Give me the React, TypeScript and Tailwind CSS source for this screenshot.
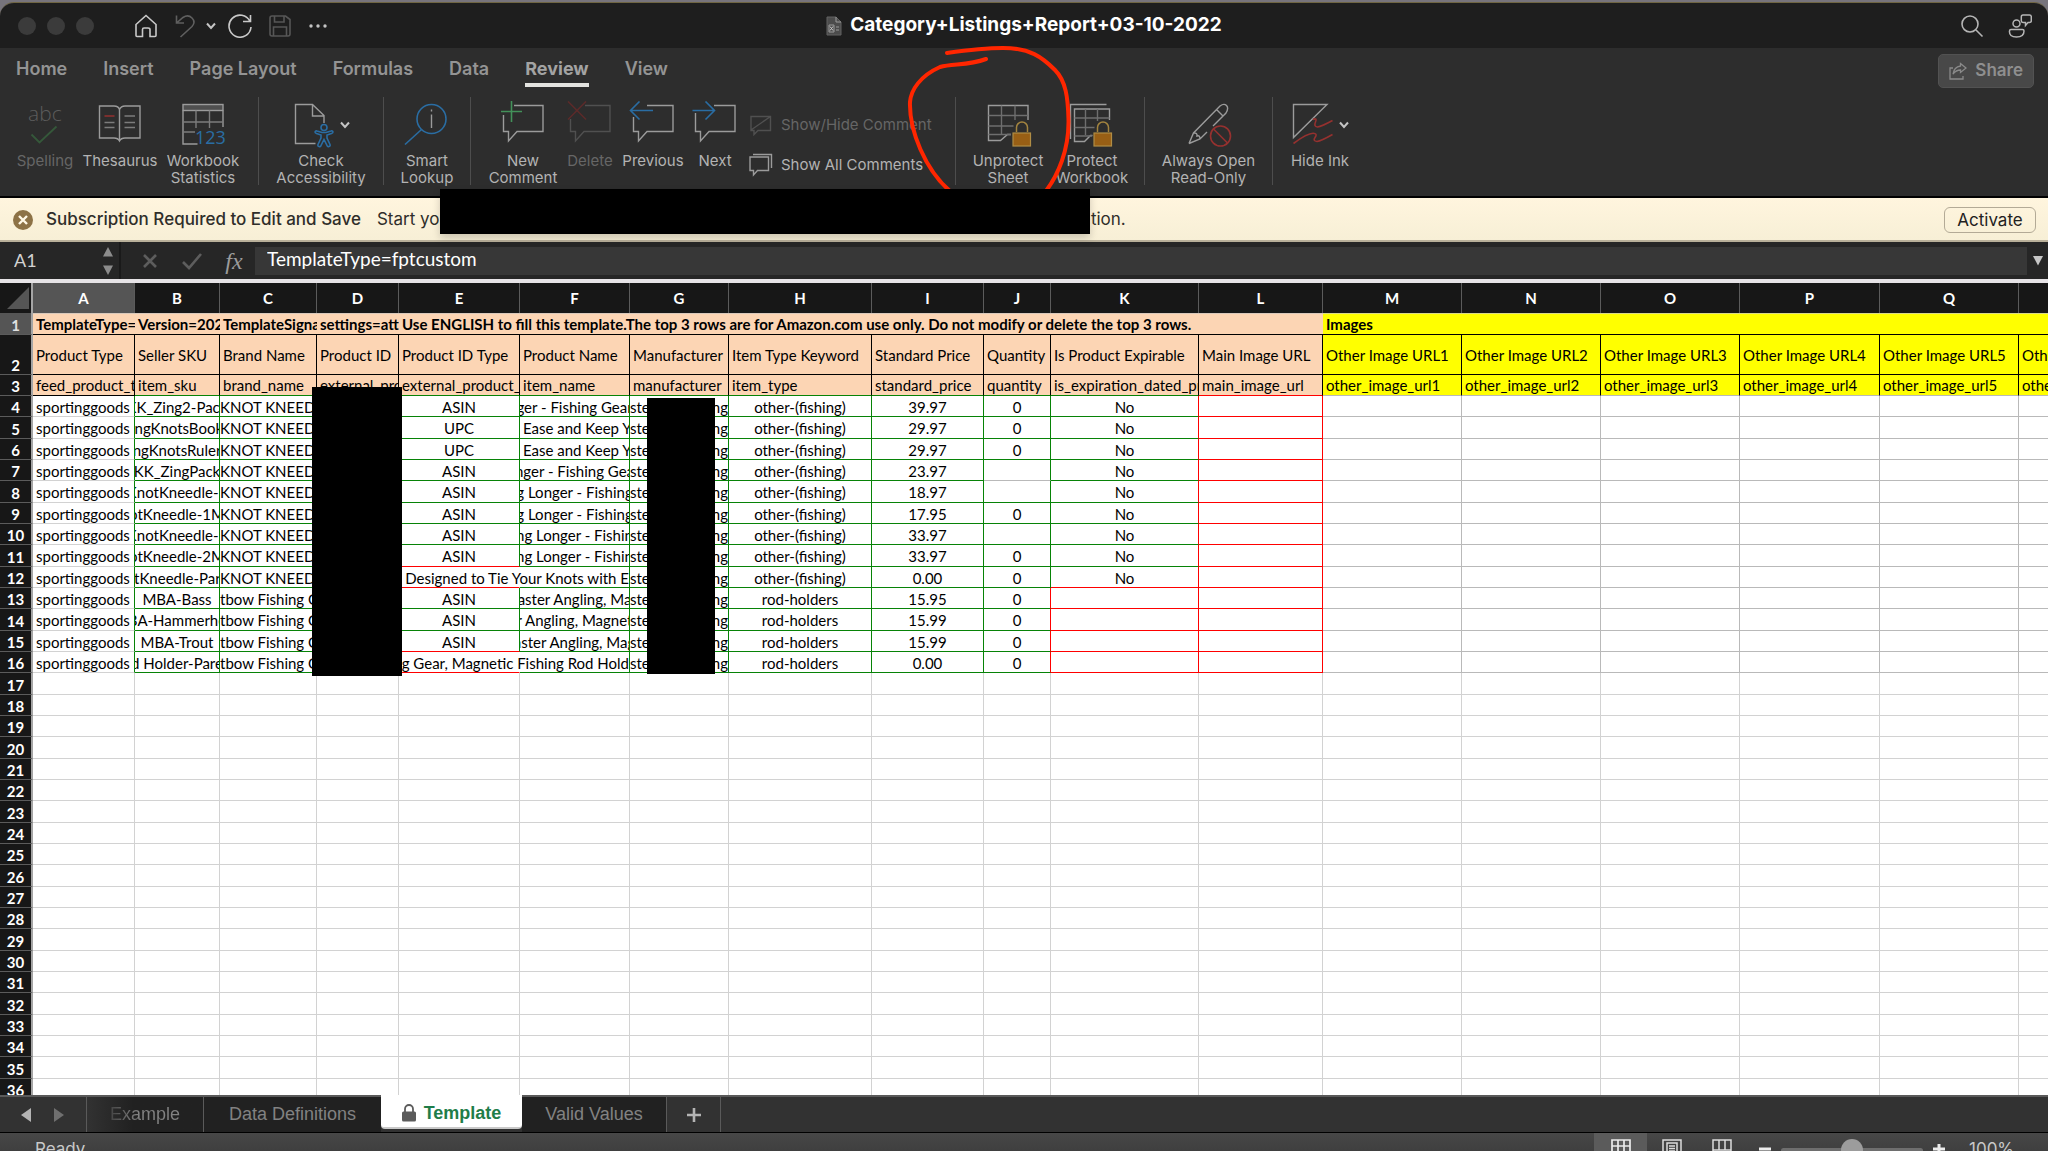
import React from 'react';
import { clsx } from 'clsx';

const MENU = ['Home', 'Insert', 'Page Layout', 'Formulas', 'Data', 'Review', 'View'];

const GRAY = '#9b9b9b';
const DIM = '#505050';
const BLUE = '#2a6da3';
const GREEN = '#43915a';
const RED = '#95312f';

/* ---------- Spreadsheet data ---------- */

const COLUMNS = [
  { letter: 'A', width: 'w-[102px]', title: 'Product Type', field: 'feed_product_type' },
  { letter: 'B', width: 'w-[85px]', title: 'Seller SKU', field: 'item_sku' },
  { letter: 'C', width: 'w-[97px]', title: 'Brand Name', field: 'brand_name' },
  { letter: 'D', width: 'w-[82px]', title: 'Product ID', field: 'external_product_id' },
  { letter: 'E', width: 'w-[121px]', title: 'Product ID Type', field: 'external_product_id_type' },
  { letter: 'F', width: 'w-[110px]', title: 'Product Name', field: 'item_name' },
  { letter: 'G', width: 'w-[99px]', title: 'Manufacturer', field: 'manufacturer' },
  { letter: 'H', width: 'w-[143px]', title: 'Item Type Keyword', field: 'item_type' },
  { letter: 'I', width: 'w-[112px]', title: 'Standard Price', field: 'standard_price' },
  { letter: 'J', width: 'w-[67px]', title: 'Quantity', field: 'quantity' },
  { letter: 'K', width: 'w-[148px]', title: 'Is Product Expirable', field: 'is_expiration_dated_product' },
  { letter: 'L', width: 'w-[124px]', title: 'Main Image URL', field: 'main_image_url' },
  { letter: 'M', width: 'w-[139px]', title: 'Other Image URL1', field: 'other_image_url1' },
  { letter: 'N', width: 'w-[139px]', title: 'Other Image URL2', field: 'other_image_url2' },
  { letter: 'O', width: 'w-[139px]', title: 'Other Image URL3', field: 'other_image_url3' },
  { letter: 'P', width: 'w-[140px]', title: 'Other Image URL4', field: 'other_image_url4' },
  { letter: 'Q', width: 'w-[139px]', title: 'Other Image URL5', field: 'other_image_url5' },
  { letter: 'R', width: 'w-[139px]', title: 'Other Image URL6', field: 'other_image_url6' },
];

interface Item {
  sku: string;
  brand: string;
  idType: string;
  name: string;
  kind: string;
  price: string;
  qty: string;
  expirable: string;
}

const KNOT = 'KNOT KNEEDLE';
const BOW = 'tbow Fishing Ge';
const FISHING = 'other-(fishing)';
const ROD = 'rod-holders';

const ITEMS: Item[] = [
  { sku: 'KK_Zing2-Pack', brand: KNOT, idType: 'ASIN', name: 'ger - Fishing Gear', kind: FISHING, price: '39.97', qty: '0', expirable: 'No' },
  { sku: 'ingKnotsBook', brand: KNOT, idType: 'UPC', name: 'Ease and Keep Yo', kind: FISHING, price: '29.97', qty: '0', expirable: 'No' },
  { sku: 'ngKnotsRuler', brand: KNOT, idType: 'UPC', name: 'Ease and Keep Yo', kind: FISHING, price: '29.97', qty: '0', expirable: 'No' },
  { sku: 'KK_ZingPack', brand: KNOT, idType: 'ASIN', name: 'nger - Fishing Gea', kind: FISHING, price: '23.97', qty: '', expirable: 'No' },
  { sku: 'KnotKneedle-1', brand: KNOT, idType: 'ASIN', name: 'g Longer - Fishing', kind: FISHING, price: '18.97', qty: '', expirable: 'No' },
  { sku: 'otKneedle-1M', brand: KNOT, idType: 'ASIN', name: 'g Longer - Fishing', kind: FISHING, price: '17.95', qty: '0', expirable: 'No' },
  { sku: 'KnotKneedle-2', brand: KNOT, idType: 'ASIN', name: 'ng Longer - Fishin', kind: FISHING, price: '33.97', qty: '', expirable: 'No' },
  { sku: 'otKneedle-2M', brand: KNOT, idType: 'ASIN', name: 'ng Longer - Fishin', kind: FISHING, price: '33.97', qty: '0', expirable: 'No' },
  { sku: 'otKneedle-Pare', brand: KNOT, idType: '', name: 'E - Designed to Tie Your Knots with E', kind: FISHING, price: '0.00', qty: '0', expirable: 'No' },
  { sku: 'MBA-Bass', brand: BOW, idType: 'ASIN', name: 'aster Angling, Ma', kind: ROD, price: '15.95', qty: '0', expirable: '' },
  { sku: 'BA-Hammerhe', brand: BOW, idType: 'ASIN', name: 'r Angling, Magnet', kind: ROD, price: '15.99', qty: '0', expirable: '' },
  { sku: 'MBA-Trout', brand: BOW, idType: 'ASIN', name: 'aster Angling, Mag', kind: ROD, price: '15.99', qty: '0', expirable: '' },
  { sku: 'd Holder-Pare', brand: BOW, idType: '', name: 'hing Gear, Magnetic Fishing Rod Hold', kind: ROD, price: '0.00', qty: '0', expirable: '' },
];

const EMPTY_ROWS = Array.from({ length: 20 }, (_, i) => 17 + i);

// the grid pitch is 64px for every three rows
const rowHeight = (row: number) => (row % 3 === 2 ? 'h-[22px]' : 'h-[21px]');

/* ---------- Icons ---------- */

function Icon({ children, className = 'w-12 h-12' }: { children: React.ReactNode; className?: string }) {
  return (
    <svg viewBox="0 0 48 48" fill="none" stroke={GRAY} strokeWidth="1.4" className={className} aria-hidden="true">
      {children}
    </svg>
  );
}

function Chevron({ className = 'w-[10px] h-[10px]' }: { className?: string }) {
  return (
    <svg viewBox="0 0 10 10" fill="none" stroke="#c4c4c4" strokeWidth="2" className={className} aria-hidden="true">
      <path d="M1 2.5l4 4.5 4-4.5" />
    </svg>
  );
}

function Bubble({ from, left, color = GRAY }: { from: number; left: number; color?: string }) {
  return <path stroke={color} d={`M${from} 4.5H44V30.5H18L9.5 40V30.5H4.5V${left}`} />;
}

function Lock({ x }: { x: number }) {
  return (
    <g>
      <path stroke="#a3843f" strokeWidth="1.5" d={`M${x + 3.5} 31v-4.5a5.5 5.5 0 0 1 11 0V31`} />
      <rect x={x} y="32" width="17.5" height="13" fill="#985f15" stroke="#b08d45" strokeWidth="1.2" />
    </g>
  );
}

const spellingIcon = (
  <Icon>
    <text x="7" y="20" fontSize="21" fontFamily="Open Sans, sans-serif" fontWeight="300" fill="#5c5c5c" stroke="none">abc</text>
    <path stroke="#35583a" strokeWidth="1.8" d="M10.5 33.5l8 8 17-16" />
  </Icon>
);

const thesaurusIcon = (
  <Icon>
    <path d="M3.5 5H18q4.500 0 5.500 3.500Q25 5 29 5H44v32H29q-4 0-5.500 3Q22 37 18 37H3.500zM23.500 8.500V40" />
    <path stroke={RED} strokeWidth="1.6" d="M8.500 15h10" />
    <path stroke="#7c7c7c" d="M8.500 21.500h10M8.500 26.500h10M28.500 15h10.500M28.500 21.500h10.500M28.500 26.500h10.500" />
  </Icon>
);

const statisticsIcon = (
  <Icon>
    <rect x="4" y="3.500" width="40" height="6" fill="#4f4f4f" />
    <path d="M18.500 43H4V9.500M44 9.500V26" />
    <path stroke="#7c7c7c" d="M4 21h40M17 9.500V27M30.500 9.500V27M4 31h12" />
    <text x="16" y="43" fontSize="18" fontFamily="Open Sans, sans-serif" fill={BLUE} stroke="none">123</text>
  </Icon>
);

const accessibilityIcon = (
  <Icon>
    <path d="M32 22v-7.500L20.500 3.500H3.500v39h20M20.500 3.500v11.500H32" />
    <g stroke={BLUE} strokeWidth="1.6">
      <circle cx="32" cy="26.500" r="3" />
      <path d="M23 31q.5-1.500 2-1l5 1.500h4l5-1.500q1.500-.5 2 1 0 1-1.500 1.500L35 34v3l3 6.500q.5 1.500-1 2t-2-1l-3-6-3 6q-.5 1.500-2 1t-1-2l3-6.500v-3l-4.500-1.500Q23 32 23 31z" />
    </g>
  </Icon>
);

const lookupIcon = (
  <Icon>
    <g stroke={BLUE} strokeWidth="1.600">
      <circle cx="28.500" cy="18" r="14.500" />
      <path d="M18.500 28.500L2 43.500" />
    </g>
    <path d="M28.500 13.500V27M28.500 8.500v2" />
  </Icon>
);

const newCommentIcon = (
  <Icon>
    <Bubble from={15} left={14} />
    <path stroke={GREEN} strokeWidth="1.600" d="M12.500 0v21M2 10.500h21" />
  </Icon>
);

const deleteIcon = (
  <Icon>
    <Bubble from={19} left={18} color={DIM} />
    <path stroke="#5b2b2a" strokeWidth="1.600" d="M2 0.500l18 18M20 0.500l-18 18" />
  </Icon>
);

const previousIcon = (
  <Icon>
    <Bubble from={18} left={16} />
    <path stroke={BLUE} strokeWidth="1.600" d="M10.500 0.500l-9 9 9 9M1.500 9.500H24" />
  </Icon>
);

const nextIcon = (
  <Icon>
    <Bubble from={23} left={12} />
    <path stroke={BLUE} strokeWidth="1.600" d="M14.500 0.500l9 9-9 9M23.500 9.500H1.500" />
  </Icon>
);

const unprotectIcon = (
  <Icon>
    <path d="M44 19V4.500H4.500V39.500h12l7-6h3.500" />
    <path stroke="#6e6e6e" d="M4.500 14.500H44M4.500 25h25M4.500 33.500H27M17.500 4.500v29M31 4.500V19" />
    <Lock x={29} />
  </Icon>
);

const protectIcon = (
  <Icon>
    <path d="M38.500 3.500H2.500V38" />
    <path d="M41.500 19V8H6.500V40.500h10l6-6h2" />
    <path stroke="#6e6e6e" d="M6.500 17h35M6.500 26.500h20M6.500 35H24M17.500 8v26M29.500 8V20" />
    <Lock x={26} />
  </Icon>
);

const readOnlyIcon = (
  <Icon>
    <path d="M4 42.500l4.500-10.500L35 5q4-3 6.500-.5T41 12L28 25M4 42.500L15 38l7-7M8.500 32q4-.5 3.500 3 3-1 3 3M31.500 8.500l7 7" />
    <g stroke={RED} strokeWidth="1.600">
      <circle cx="35.500" cy="35" r="10" />
      <path d="M28.500 28l14 14" />
    </g>
  </Icon>
);

const inkIcon = (
  <Icon>
    <path d="M2.500 3.500H36L2.500 36.500z" />
    <path stroke={RED} strokeWidth="1.600" d="M22 18.500q4.500-2 2.500 2.500t2 5q4-.5 15-6.500M2.500 42.500Q18 31 23.500 32.500q3 .5.500 4t2 4q4-.5 15.500-7" />
  </Icon>
);

/* ---------- Title bar, menu and ribbon ---------- */

function TitleBar() {
  return (
    <header className="relative flex h-[45px] items-center bg-[#1e1e1e] pl-[18px] pr-4">
      <div className="flex gap-[11px]">
        <span className="size-[18px] rounded-full bg-[#3b3b3b]" />
        <span className="size-[18px] rounded-full bg-[#3b3b3b]" />
        <span className="size-[18px] rounded-full bg-[#3b3b3b]" />
      </div>
      <div className="ml-10 flex items-center">
        <button aria-label="Home" className="mr-4">
          <svg viewBox="0 0 24 24" fill="none" stroke="#c9c9c9" strokeWidth="1.600" className="size-6">
            <path d="M2 10.500L12 1.500l10 9V21.500q0 1-1 1h-5v-7q0-1.500-2-1.500h-4q-1.500 0-1.500 1.500v7H3q-1 0-1-1z" />
          </svg>
        </button>
        <button aria-label="Undo" className="mr-2">
          <svg viewBox="0 0 24 24" fill="none" stroke="#5f5f5f" strokeWidth="1.600" className="size-6">
            <path d="M2.500 1.500v7.500H10M2.500 9L9 3.500q5-3.500 9 .5t0 8.500L6.500 23" />
          </svg>
        </button>
        <button aria-label="Undo list" className="mr-3">
          <Chevron />
        </button>
        <button aria-label="Redo" className="mr-4">
          <svg viewBox="0 0 24 24" fill="none" stroke="#c9c9c9" strokeWidth="1.600" className="size-6">
            <path d="M22.500 1v6.500H15M22 7.500a11 11 0 1 0 1 5.500" />
          </svg>
        </button>
        <button aria-label="Save" className="mr-4">
          <svg viewBox="0 0 24 24" fill="none" stroke="#565656" strokeWidth="1.600" className="size-6">
            <path d="M2 4q0-2 2-2h13.500L22 5.500V20q0 2-2 2H4q-2 0-2-2zM6.500 2v6h9.500V2M5.500 22v-9h13v9" />
          </svg>
        </button>
        <button aria-label="More">
          <svg viewBox="0 0 20 6" fill="#c4c4c4" className="h-[6px] w-5">
            <circle cx="3" cy="3" r="1.700" />
            <circle cx="10" cy="3" r="1.700" />
            <circle cx="17" cy="3" r="1.700" />
          </svg>
        </button>
      </div>

      <div className="absolute inset-x-0 flex items-center justify-center gap-2 text-[19px] font-bold text-white pointer-events-none">
        <svg viewBox="0 0 16 20" className="h-5 w-4" fill="none" aria-hidden="true">
          <path d="M1 1h9l5 5v13H1z" fill="#4c4c4c" stroke="#626262" />
          <path d="M3 9h5v7H3zM10 1v5h5M10 11h3M10 14h3" stroke="#9a9a9a" />
          <path d="M4 10.500l3 4M7 10.500l-3 4" stroke="#c8c8c8" />
        </svg>
        Category+Listings+Report+03-10-2022
      </div>

      <div className="ml-auto flex items-center gap-6">
        <button aria-label="Search">
          <svg viewBox="0 0 24 24" fill="none" stroke="#b5b5b5" strokeWidth="1.600" className="size-6">
            <circle cx="10" cy="10" r="8" />
            <path d="M16 16l6.500 6.500" />
          </svg>
        </button>
        <button aria-label="Comments">
          <svg viewBox="0 0 24 24" fill="none" stroke="#b5b5b5" strokeWidth="1.500" className="size-6">
            <circle cx="8.500" cy="9.500" r="3.500" />
            <path d="M3 15.500h11.500q1.500 0 1.500 1.500 0 6-7.500 6T1.500 17q0-1.500 1.500-1.500zM15 1h6.500q1.800 0 1.800 1.800v4q0 1.700-1.800 1.700H20l-2.500 3V8.500H15q-1.700 0-1.700-1.700v-4Q13.300 1 15 1z" />
          </svg>
        </button>
      </div>
    </header>
  );
}

function MenuBar() {
  return (
    <nav className="flex h-12 items-start justify-between bg-[#2d2d2d] pl-4 pr-[14px] pt-[6px]">
      <div className="flex gap-9 pt-px text-lg leading-7 font-semibold text-[#949494]">
        {MENU.map((name) => (
          <button
            key={name}
            className={clsx(
              'border-b-4',
              name === 'Review' ? 'border-[#e3e3e0] font-bold text-[#a3a3a3]' : 'border-transparent'
            )}
          >
            {name}
          </button>
        ))}
      </div>
      <button className="flex h-[34px] items-center gap-2 rounded-[5px] border border-[#525252] bg-[#484848] px-[10px] text-[17px] font-semibold text-[#8f8f8f]">
        <svg viewBox="0 0 18 18" fill="none" stroke="#8a8a8a" strokeWidth="1.300" className="size-[18px]" aria-hidden="true">
          <path d="M4 6H1v11h13v-3M11.500 1.500l5.500 4.500-5.500 4.500V8Q7 8 4 12q1-7 7.500-8z" />
        </svg>
        Share
      </button>
    </nav>
  );
}

interface ToolProps {
  icon: React.ReactNode;
  lines: string[];
  width: string;
  menu?: boolean;
  disabled?: boolean;
}

function Tool({ icon, lines, width, menu, disabled }: ToolProps) {
  return (
    <button disabled={disabled} className={clsx('flex shrink-0 flex-col items-center', width)}>
      <span className="flex items-center">
        {icon}
        {menu && <Chevron />}
      </span>
      <span className={clsx('mt-[3px] text-[15px] leading-[17px] whitespace-nowrap', disabled ? 'text-[#666666]' : 'text-[#b3b3b3]')}>
        {lines.map((line) => (
          <span key={line} className="block">{line}</span>
        ))}
      </span>
    </button>
  );
}

function Divider() {
  return <span className="mx-[10px] -mt-1 h-[88px] w-px shrink-0 bg-[#4d4d4d]" />;
}

function Ribbon() {
  return (
    <div className="flex h-[102px] items-start border-b-2 border-black bg-[#2d2d2d] pl-2 pt-[5px]">
      <Tool icon={spellingIcon} lines={['Spelling']} width="w-[74px]" disabled />
      <Tool icon={thesaurusIcon} lines={['Thesaurus']} width="w-[76px]" />
      <Tool icon={statisticsIcon} lines={['Workbook', 'Statistics']} width="w-[90px]" />
      <Divider />
      <Tool icon={accessibilityIcon} lines={['Check', 'Accessibility']} width="w-[104px]" menu />
      <Divider />
      <Tool icon={lookupIcon} lines={['Smart', 'Lookup']} width="w-[66px]" />
      <Divider />
      <Tool icon={newCommentIcon} lines={['New', 'Comment']} width="w-[84px]" />
      <Tool icon={deleteIcon} lines={['Delete']} width="w-[50px]" disabled />
      <Tool icon={previousIcon} lines={['Previous']} width="w-[76px]" />
      <Tool icon={nextIcon} lines={['Next']} width="w-[48px]" />
      <div className="flex w-[206px] shrink-0 flex-col gap-4 pl-[10px] pt-3 text-[15px] leading-6">
        <button disabled className="flex items-center gap-2 whitespace-nowrap text-[#666666]">
          <svg viewBox="0 0 24 24" fill="none" stroke={DIM} strokeWidth="1.400" className="size-6" aria-hidden="true">
            <path d="M2 3.500h19.500v14H9l-4 4v-4H2zM2 17L21.500 3.500" />
          </svg>
          Show/Hide Comment
        </button>
        <button className="flex items-center gap-2 whitespace-nowrap text-[#b3b3b3]">
          <svg viewBox="0 0 24 24" fill="none" stroke={GRAY} strokeWidth="1.400" className="size-6" aria-hidden="true">
            <path d="M1 4h18.500v13.500H8.500L4.500 22v-4.500H1zM4 1.500h18.500V15" />
          </svg>
          Show All Comments
        </button>
      </div>
      <Divider />
      <Tool icon={unprotectIcon} lines={['Unprotect', 'Sheet']} width="w-[84px]" />
      <Tool icon={protectIcon} lines={['Protect', 'Workbook']} width="w-[84px]" />
      <Divider />
      <Tool icon={readOnlyIcon} lines={['Always Open', 'Read-Only']} width="w-[107px]" />
      <Divider />
      <Tool icon={inkIcon} lines={['Hide Ink']} width="w-[74px]" menu />
    </div>
  );
}

/* ---------- Subscription notice and formula bar ---------- */

function Notice() {
  return (
    <div className="flex h-11 items-center border-b-2 border-[#b9b09a] bg-linear-to-b from-[#fff5de] to-[#f7efd6] px-3 pt-[2px] text-[17px] text-[#2f2e2a]">
      <svg viewBox="0 0 22 22" className="size-[22px]" aria-hidden="true">
        <circle cx="11" cy="11" r="10" fill="#8d7246" />
        <path d="M7 7l8 8M15 7l-8 8" stroke="#fff8e6" strokeWidth="2.400" />
      </svg>
      <span className="ml-3 font-medium">Subscription Required to Edit and Save</span>
      <span className="ml-4 w-[62px] overflow-hidden whitespace-nowrap">Start you</span>
      <span className="ml-[652px]">tion.</span>
      <button className="ml-auto h-[26px] w-[92px] rounded-md border border-[#b3aa96] text-[#22211e]">Activate</button>
    </div>
  );
}

function FormulaBar() {
  return (
    <div className="flex h-[41px] items-center border-b-4 border-[#e6e3e6] bg-[#262626]">
      <div className="flex h-full w-[121px] items-center border-r-2 border-[#1a1a1a] pl-[14px]">
        <input
          aria-label="Name box"
          defaultValue="A1"
          className="w-[88px] bg-transparent pb-[2px] font-[Lato,sans-serif] text-lg text-[#d2d2d2] outline-none"
        />
        <svg viewBox="0 0 12 28" fill="#8c8c8c" className="h-7 w-3" aria-hidden="true">
          <path d="M6 0l5 9.500H1zM6 28l5-9.500H1z" />
        </svg>
      </div>
      <button aria-label="Cancel" className="ml-5">
        <svg viewBox="0 0 18 18" stroke="#5d5d5d" strokeWidth="2.600" className="size-[18px]">
          <path d="M3 3l12 12M15 3L3 15" />
        </svg>
      </button>
      <button aria-label="Enter" className="ml-[22px]">
        <svg viewBox="0 0 22 18" fill="none" stroke="#5d5d5d" strokeWidth="2.600" className="h-[18px] w-[22px]">
          <path d="M2 10l6 6L20 2" />
        </svg>
      </button>
      <button aria-label="Insert function" className="ml-5 w-[22px] font-['Liberation_Serif',serif] text-2xl leading-6 italic text-[#9b9b9b]">fx</button>
      <input
        aria-label="Formula"
        defaultValue="TemplateType=fptcustom"
        className="ml-[10px] h-7 min-w-0 flex-1 bg-[#373737] pb-[2px] pl-3 font-[Lato,sans-serif] text-[19px] text-white outline-none"
      />
      <button aria-label="Expand formula bar" className="flex w-[21px] justify-center">
        <svg viewBox="0 0 12 10" fill="#c6c6c6" className="h-[10px] w-3">
          <path d="M1 0h10L6 9.500z" />
        </svg>
      </button>
    </div>
  );
}

/* ---------- Grid ---------- */

type Line = 'black' | 'green' | 'red' | 'gray' | 'light' | 'none';

const RIGHT: Record<Line, string> = {
  black: 'border-r-black',
  green: 'border-r-[#078307]',
  red: 'border-r-[#ff0000]',
  gray: 'border-r-[#b9b9b9]',
  light: 'border-r-[#d2d2d2]',
  none: 'border-r-transparent',
};

const BOTTOM: Record<Line, string> = {
  black: 'border-b-black',
  green: 'border-b-[#078307]',
  red: 'border-b-[#ff0000]',
  gray: 'border-b-[#b9b9b9]',
  light: 'border-b-[#d2d2d2]',
  none: 'border-b-transparent',
};

interface CellProps {
  right: Line;
  bottom: Line;
  children?: React.ReactNode;
  align?: 'left' | 'center' | 'right';
  spill?: boolean;
}

function Cell({ right, bottom, children, align = 'center', spill }: CellProps) {
  return (
    <td className={clsx('border-r border-b p-0', RIGHT[right], BOTTOM[bottom])}>
      {children && (
        <div
          className={clsx(
            'flex whitespace-nowrap pt-px',
            align === 'center' && 'justify-center',
            align === 'right' && 'justify-end',
            align === 'left' && 'pl-[3px]',
            !spill && 'overflow-hidden'
          )}
        >
          {children}
        </div>
      )}
    </td>
  );
}

function RowNumber({ row, active }: { row: number; active?: boolean }) {
  return (
    <th
      scope="row"
      className={clsx(
        'border-r-2 border-b border-r-[#a5a5a5] border-b-[#5b5b5b] p-0 align-bottom font-bold',
        active ? 'bg-[#555555] text-[#e0e0e0]' : 'bg-[#171717] text-white'
      )}
    >
      {row}
    </th>
  );
}

function ItemRow({ item, row }: { item: Item; row: number }) {
  const parent = item.idType === '';
  const nextParent = row === 11 || row === 15;
  const noExpiry = item.expirable === '';
  const nameAlign = parent ? 'right' : item.name.startsWith('Ease') ? 'left' : 'center';
  return (
    <tr className={rowHeight(row)}>
      <RowNumber row={row} />
      <Cell right="green" bottom="light" align="left">sportinggoods</Cell>
      <Cell right="green" bottom="green">{item.sku}</Cell>
      <Cell right="green" bottom="green" align="left">
        <span className="-ml-[3px]">{item.brand}</span>
      </Cell>
      <Cell right="green" bottom="green" />
      <Cell right={parent ? 'none' : 'green'} bottom={parent || nextParent ? 'red' : 'green'}>
        {item.idType}
      </Cell>
      <Cell right="green" bottom="green" align={nameAlign} spill={parent}>
        {item.name}
      </Cell>
      <Cell right="green" bottom="green">
        <span className="flex-1">ste</span>
        <span>ng</span>
      </Cell>
      <Cell right="green" bottom="green">{item.kind}</Cell>
      <Cell right="green" bottom="green">{item.price}</Cell>
      <Cell right={noExpiry ? 'red' : 'green'} bottom={row === 7 ? 'gray' : 'green'}>{item.qty}</Cell>
      <Cell right="red" bottom={noExpiry || row === 12 ? 'red' : 'green'}>{item.expirable}</Cell>
      <Cell right="red" bottom="red" />
      {COLUMNS.slice(12).map((c) => (
        <Cell key={c.letter} right="gray" bottom="gray" />
      ))}
    </tr>
  );
}

function Sheet() {
  return (
    <main className="relative min-h-0 flex-1 overflow-hidden bg-white font-[Lato,sans-serif] text-[15px] leading-[18px] text-black">
      <table className="w-[2158px] table-fixed border-separate border-spacing-0">
        <colgroup>
          <col className="w-[33px]" />
          {COLUMNS.map((c) => (
            <col key={c.letter} className={c.width} />
          ))}
        </colgroup>
        <thead>
          <tr className="h-[30px]">
            <th className="border-r-2 border-r-[#a5a5a5] bg-[#171717] p-0 align-bottom">
              <svg viewBox="0 0 22 22" className="ml-[7px] mb-1 h-[22px] w-[22px]" aria-hidden="true">
                <path d="M22 0v22H0z" fill="#555555" />
              </svg>
            </th>
            {COLUMNS.map((c) => (
              <th
                key={c.letter}
                scope="col"
                className={clsx(
                  'border-r border-r-[#5b5b5b] p-0 font-bold text-white',
                  c.letter === 'A' ? 'bg-[#555555]' : 'bg-[#171717]'
                )}
              >
                {c.letter}
              </th>
            ))}
          </tr>
        </thead>
        <tbody>
          <tr className="h-[22px] font-bold">
            <RowNumber row={1} active />
            {['TemplateType=fptcustom', 'Version=2021', 'TemplateSignature', 'settings=attributes'].map((text) => (
              <td key={text} className="overflow-hidden whitespace-nowrap border-t border-b border-t-[#d9c9bb] border-b-black bg-[#fcd5b4] p-0 pl-[3px]">
                {text}
              </td>
            ))}
            <td colSpan={8} className="whitespace-nowrap border-t border-b border-t-[#d9c9bb] border-b-black bg-[#fcd5b4] p-0 pl-[3px]">
              Use ENGLISH to fill this template.The top 3 rows are for Amazon.com use only. Do not modify or delete the top 3 rows.
            </td>
            <td colSpan={6} className="border-t border-b border-t-[#d9d98a] border-b-black bg-[#ffff00] p-0 pl-[3px]">Images</td>
          </tr>
          <tr className="h-10">
            <RowNumber row={2} />
            {COLUMNS.map((c, i) => (
              <td
                key={c.letter}
                className={clsx(
                  'overflow-hidden whitespace-nowrap border-r border-b border-black p-0 pl-[3px]',
                  i < 12 ? 'bg-[#fcd5b4]' : 'bg-[#ffff00]'
                )}
              >
                {c.title}
              </td>
            ))}
          </tr>
          <tr className="h-[21px]">
            <RowNumber row={3} />
            {COLUMNS.map((c, i) => (
              <td
                key={c.letter}
                className={clsx(
                  'overflow-hidden whitespace-nowrap border-r border-b border-r-black p-0 pl-[3px]',
                  i < 12 ? 'bg-[#fcd5b4]' : 'bg-[#ffff00]',
                  BOTTOM[i === 0 ? 'black' : i < 11 ? 'green' : i === 11 ? 'red' : 'gray']
                )}
              >
                {c.field}
              </td>
            ))}
          </tr>
          {ITEMS.map((item, i) => (
            <ItemRow key={i} item={item} row={i + 4} />
          ))}
          {EMPTY_ROWS.map((row) => (
            <tr key={row} className={rowHeight(row)}>
              <RowNumber row={row} />
              {COLUMNS.map((c) => (
                <Cell key={c.letter} right="light" bottom="light" />
              ))}
            </tr>
          ))}
        </tbody>
      </table>

      {/* Redacted product ids and manufacturer */}
      <div className="absolute left-[312px] top-[104px] h-[289px] w-[90px] bg-black" />
      <div className="absolute left-[647px] top-[115px] h-[276px] w-[68px] bg-black" />
    </main>
  );
}

/* ---------- Sheet tabs and status bar ---------- */

function SheetTabs() {
  return (
    <div className="flex h-[38px] items-stretch border-t-2 border-b border-t-[#5a5a5a] border-b-black bg-[#323232] font-['Liberation_Sans',sans-serif] text-lg text-[#828282]">
      <button aria-label="Previous sheet" className="ml-5 w-[13px]">
        <svg viewBox="0 0 12 14" fill="#b4b4b4" className="h-[14px] w-3"><path d="M11 0v14L1 7z" /></svg>
      </button>
      <button aria-label="Next sheet" className="ml-5 w-[13px]">
        <svg viewBox="0 0 12 14" fill="#6f6f6f" className="h-[14px] w-3"><path d="M1 0v14l10-7z" /></svg>
      </button>
      <button className="ml-5 w-[117px] border-l border-[#5a5a5a] bg-linear-to-r from-[#323232] to-[#212121] to-40% pb-[2px]">
        <span className="bg-linear-to-r from-[#444444] to-[#828282] to-40% bg-clip-text text-transparent">Example</span>
      </button>
      <button className="w-[178px] border-l border-[#5a5a5a] bg-[#212121] pb-[2px]">Data Definitions</button>
      <button className="-mt-[2px] mb-[3px] flex w-[141px] items-center justify-center gap-2 rounded-b-[4px] border-b-2 border-[#c9c9c9] bg-white pt-1 font-bold text-[#1f7d49]">
        <svg viewBox="0 0 14 18" fill="none" className="h-[18px] w-[14px]" aria-hidden="true">
          <rect y="7.500" width="14" height="10" rx="1.500" fill="#5b5b5b" />
          <path d="M3 8V5a4 4 0 0 1 8 0v3" stroke="#5b5b5b" strokeWidth="1.800" />
        </svg>
        Template
      </button>
      <button className="w-[144px] bg-[#212121] pb-[2px]">Valid Values</button>
      <button aria-label="New sheet" className="flex w-[55px] items-center justify-center border-x border-[#5a5a5a]">
        <svg viewBox="0 0 16 16" stroke="#b4b4b4" strokeWidth="2.600" className="size-4"><path d="M8 1v14M1 8h14" /></svg>
      </button>
    </div>
  );
}

function StatusBar() {
  return (
    <footer className="h-[18px] overflow-hidden bg-[#434343]">
      <div className="flex h-[34px] items-center bg-linear-to-b from-[#474747] to-[#383838] px-[35px] text-[17px] text-[#c9c9c9]">
        <span>Ready</span>
        <div className="ml-auto flex h-full items-center">
          <button aria-label="Normal view" className="flex h-full w-[53px] items-start justify-center bg-[#5b5b5b] pt-[6px]">
            <svg viewBox="0 0 20 20" fill="none" stroke="#ececec" strokeWidth="1.700" className="size-5">
              <path d="M1 1h18v18H1zM7 1v18M13 1v18M1 7h18M1 13h18" />
            </svg>
          </button>
          <button aria-label="Page layout view" className="flex h-full w-[50px] items-start justify-center pt-[6px]">
            <svg viewBox="0 0 20 20" fill="none" stroke="#dcdcdc" strokeWidth="1.500" className="size-5">
              <path d="M1 1h18v18H1zM5 4h10v16H5zM7 7h6M7 9.500h6M7 12h6" />
            </svg>
          </button>
          <button aria-label="Page break view" className="flex h-full w-[50px] items-start justify-center pt-[6px]">
            <svg viewBox="0 0 20 20" fill="none" stroke="#dcdcdc" strokeWidth="1.500" className="size-5">
              <path d="M1 1h18v18H1zM7 1v10M13 1v10M1 11h12M13 11h6" />
            </svg>
          </button>
          <button aria-label="Zoom out" className="ml-3">
            <svg viewBox="0 0 12 12" stroke="#ececec" strokeWidth="3" className="size-3"><path d="M0 5h12" /></svg>
          </button>
          <input
            type="range"
            aria-label="Zoom"
            defaultValue={50}
            className="mx-[10px] h-[5px] w-[142px] appearance-none rounded-full bg-[#6e6e6e] [&::-webkit-slider-thumb]:size-[22px] [&::-webkit-slider-thumb]:appearance-none [&::-webkit-slider-thumb]:rounded-full [&::-webkit-slider-thumb]:bg-[#9c9c9c]"
          />
          <button aria-label="Zoom in">
            <svg viewBox="0 0 12 12" stroke="#ececec" strokeWidth="3" className="size-3"><path d="M0 5h12M6 -1v12" /></svg>
          </button>
          <span className="ml-6 w-11">100%</span>
        </div>
      </div>
    </footer>
  );
}

export default function App() {
  return (
    <div className="relative flex h-screen flex-col overflow-hidden bg-[#77747c] pt-[2px] font-[Inter,sans-serif]">
      <div className="flex min-h-0 flex-1 flex-col overflow-hidden rounded-t-[14px] border-t border-[#6f6543]">
        <TitleBar />
        <MenuBar />
        <Ribbon />
        <Notice />
        <FormulaBar />
        <Sheet />
        <SheetTabs />
        <StatusBar />
      </div>

      {/* Hand-drawn marker round Unprotect Sheet */}
      <svg
        viewBox="900 40 180 150"
        fill="none"
        stroke="#ff2600"
        strokeWidth="4"
        strokeLinecap="round"
        className="pointer-events-none absolute left-[900px] top-[40px] h-[150px] w-[180px]"
        aria-hidden="true"
      >
        <path d="M947 53C975 49 990 48 1003 48C1030 48 1042 57 1055 70C1066 81 1068 98 1068.500 120C1069 150 1058 175 1046 191" />
        <path d="M986 59C967 66 952 63 940 67C920 76 911 90 910 102C909 130 925 170 951 192" />
      </svg>
      <div className="absolute left-[440px] top-[189px] h-[45px] w-[650px] bg-black shadow-[0_4px_8px_rgba(0,0,0,0.18)]" />
    </div>
  );
}
